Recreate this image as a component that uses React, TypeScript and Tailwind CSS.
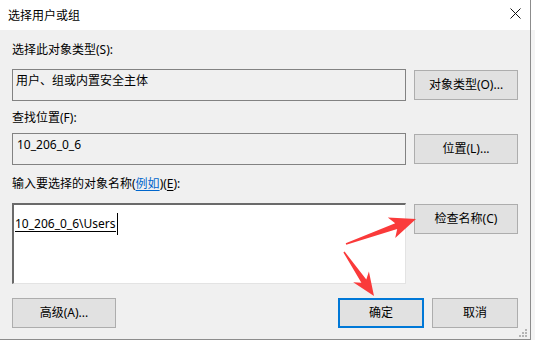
import React from 'react';

type Pt = [number, number];

function arrowPoints(tail: Pt, tip: Pt, headLen: number, headW: number, shaftTail: number, shaftHead: number) {
    const dx = tip[0] - tail[0];
    const dy = tip[1] - tail[1];
    const len = Math.sqrt(dx * dx + dy * dy);
    const ux = dx / len;
    const uy = dy / len;
    const px = -uy;
    const py = ux;
    const bx = tip[0] - ux * headLen;
    const by = tip[1] - uy * headLen;
    const pts: Pt[] = [
        [tail[0] + (px * shaftTail) / 2, tail[1] + (py * shaftTail) / 2],
        [bx + ux * 3 + (px * shaftHead) / 2, by + uy * 3 + (py * shaftHead) / 2],
        [bx - ux * 2 + (px * headW) / 2, by - uy * 2 + (py * headW) / 2],
        tip,
        [bx - ux * 2 - (px * headW) / 2, by - uy * 2 - (py * headW) / 2],
        [bx + ux * 3 - (px * shaftHead) / 2, by + uy * 3 - (py * shaftHead) / 2],
        [tail[0] - (px * shaftTail) / 2, tail[1] - (py * shaftTail) / 2],
    ];
    return pts.map((p) => `${p[0].toFixed(1)},${p[1].toFixed(1)}`).join(' ');
}

const Btn = ({ label, primary }: { label: React.ReactNode; primary?: boolean }) => (
    <div
        className={
            'flex h-[30px] w-[104px] items-center justify-center bg-[#e1e1e1] text-[12px] leading-[16px] text-black ' +
            (primary ? 'border-2 border-[#0078d7]' : 'border border-[#adadad]')
        }
    >
        {label}
    </div>
);

const App = () => {
    return (
        <div className="relative h-[342px] w-[535px] overflow-hidden bg-white font-['Noto_Sans','Noto_Sans_CJK_SC',sans-serif] text-[12px] leading-[16px] text-black">
            <div className="flex">
                <div className="flex h-[340px] w-[531px] flex-col border-r border-b border-[#8c8c8c]">
                    {/* title bar */}
                    <div className="flex h-[30px] items-center justify-between bg-white pl-[8px] pr-[9px]">
                        <span className="pt-[1px]">选择用户或组</span>
                        <svg width="11" height="11" viewBox="0 0 11 11" className="mb-[3px]">
                            <path d="M0.5 0.5 L10.5 10.5 M10.5 0.5 L0.5 10.5" stroke="#111" strokeWidth="1" />
                        </svg>
                    </div>

                    {/* body */}
                    <div className="relative flex flex-1 flex-col bg-[#f0f0f0] px-[12px]">
                        <div className="mt-[12px] h-[16px]">选择此对象类型(S):</div>
                        <div className="mt-[11px] flex items-center">
                            <div className="h-[32px] w-[394px] border border-[#828282] bg-[#f0f0f0] px-[3px] pt-[3px]">
                                用户、组或内置安全主体
                            </div>
                            <div className="ml-[8px]">
                                <Btn label="对象类型(O)..." />
                            </div>
                        </div>

                        <div className="mt-[9px] h-[16px]">查找位置(F):</div>
                        <div className="mt-[7px] flex items-center">
                            <div className="h-[32px] w-[394px] border border-[#828282] bg-[#f0f0f0] px-[4px] pt-[3px]">
                                10_206_0_6
                            </div>
                            <div className="ml-[8px]">
                                <Btn label="位置(L)..." />
                            </div>
                        </div>

                        <div className="mt-[11px] h-[16px]">
                            输入要选择的对象名称(
                            <span className="text-[#0066cc] underline underline-offset-2">例如</span>
                            )(<span className="underline underline-offset-2">E</span>):
                        </div>
                        <div className="mt-[11px] flex items-start">
                            <div className="h-[81px] w-[394px] border-t-2 border-l-2 border-r border-b border-t-[#6a6a6a] border-l-[#6a6a6a] border-r-[#e3e3e3] border-b-[#e3e3e3] bg-white pl-[1px] pt-[8px]">
                                <span className="inline-flex items-center">
                                    <span className="border-b border-black leading-[14px]">10_206_0_6\Users</span>
                                    <span className="ml-[1px] inline-block h-[22px] w-[1px] bg-black" />
                                </span>
                            </div>
                            <div className="ml-[8px] mt-[1px]">
                                <Btn label="检查名称(C)" />
                            </div>
                        </div>

                        <div className="mt-[14px] flex items-center">
                            <Btn label="高级(A)..." />
                            <div className="ml-auto flex gap-[8px]">
                                <div className="w-[86px] [&>div]:w-[86px]">
                                    <Btn label="确定" primary />
                                </div>
                                <div className="w-[86px] [&>div]:w-[86px]">
                                    <Btn label="取消" />
                                </div>
                            </div>
                        </div>

                        {/* resize grip */}
                        <svg width="10" height="10" viewBox="0 0 10 10" className="absolute right-[2px] bottom-[1px]">
                            <rect x="7" y="1" width="2" height="2" fill="#b4b4b4" />
                            <rect x="4" y="4" width="2" height="2" fill="#b4b4b4" />
                            <rect x="7" y="4" width="2" height="2" fill="#b4b4b4" />
                            <rect x="1" y="7" width="2" height="2" fill="#b4b4b4" />
                            <rect x="4" y="7" width="2" height="2" fill="#b4b4b4" />
                            <rect x="7" y="7" width="2" height="2" fill="#b4b4b4" />
                        </svg>
                    </div>
                </div>
                <div className="flex w-[4px] flex-col">
                    <div className="h-[30px] bg-white" />
                    <div className="h-[310px] bg-[#f4f4f4]" />
                </div>
            </div>

            {/* red annotation arrows */}
            <svg width="535" height="342" className="pointer-events-none absolute top-0 left-0">
                <polygon points={arrowPoints([346, 244], [416, 219], 24, 22, 1.5, 6)} fill="#fa3a3a" />
                <polygon points={arrowPoints([344, 252], [374, 296], 21, 19, 1.5, 6)} fill="#fa3a3a" />
            </svg>
        </div>
    );
};

export default App;
